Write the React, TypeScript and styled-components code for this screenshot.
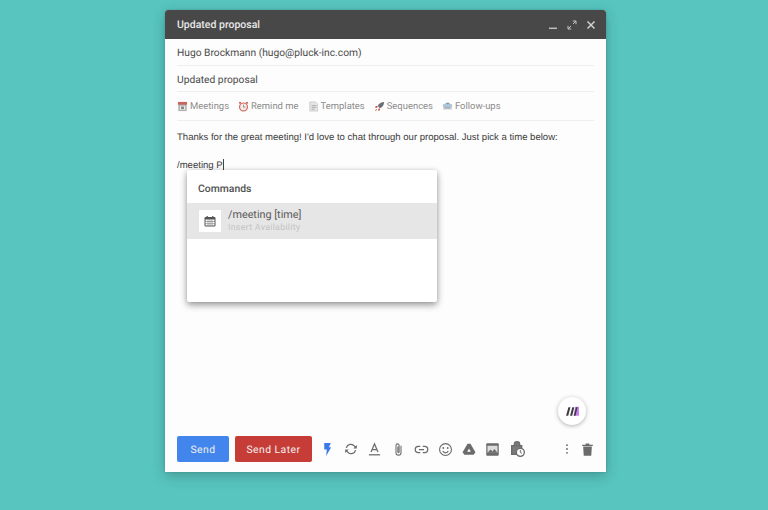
import React from "react";
import styled, { createGlobalStyle } from "styled-components";

const Global = createGlobalStyle`
  html, body { margin: 0; padding: 0; height: 100%; background: #58c5bf; overflow: hidden; }
  body { font-family: "Roboto", "Liberation Sans", sans-serif; text-rendering: geometricPrecision; }
`;

const Page = styled.div`
  width: 768px; height: 510px; box-sizing: border-box; padding: 10px 0 0 165px;
  background: #58c5bf;
`;
const Compose = styled.div`
  width: 441px; height: 462px; display: flex; flex-direction: column; background: #fdfdfd;
  border-radius: 3px 3px 0 0; box-shadow: 0 4px 14px rgba(0,0,0,.22), 0 0 3px rgba(0,0,0,.15); position: relative;
`;
const Header = styled.div`
  height: 29px; flex: none; background: #484848; border-radius: 3px 3px 0 0; display: flex; align-items: center;
  justify-content: space-between; padding: 0 10px 0 12px; color: #e9e9e9; font-size: 10.5px; font-weight: 500;
`;
const HeaderIcons = styled.div`display: flex; align-items: center; gap: 9px;`;
const Fields = styled.div`padding: 0 12px; flex: none;`;
const Field = styled.div<{ $h: number; $pt?: number }>`
  height: ${p => p.$h}px; box-sizing: border-box; padding-top: ${p => p.$pt ?? 0}px; border-bottom: 1px solid #efefef; display: flex; align-items: center;
  font-size: 10.25px; color: #4b4b4b;
`;
const Plugins = styled.div`
  height: 29px; box-sizing: border-box; padding-top: 1px; border-bottom: 1px solid #efefef; display: flex; align-items: center; gap: 9px;
`;
const Plugin = styled.div`
  display: flex; align-items: center; gap: 2px; font-size: 9.45px; color: #8c8c8c;
`;
const Body = styled.div`
  flex: 1; padding: 10px 12px 0; position: relative; font-family: "Liberation Sans", Arial, sans-serif;
  font-size: 9.55px; color: #3c3c3c;
`;
const Line = styled.div`height: 14px; line-height: 14px; margin-bottom: 14px; white-space: nowrap;`;
const Caret = styled.span`display: inline-block; width: 1px; height: 11px; background: #444; vertical-align: -2px;`;
const Popup = styled.div`
  position: absolute; left: 22px; top: 49px; width: 250px; height: 132px; background: #fff; border-radius: 2px;
  box-shadow: 0 3px 7px rgba(0,0,0,.4), 0 0 4px rgba(0,0,0,.08); font-family: "Roboto", sans-serif;
`;
const PopupTitle = styled.div`
  height: 33px; box-sizing: border-box; padding: 12px 0 0 11px; font-size: 10.4px; font-weight: 500; color: #505050; line-height: 13px;
`;
const Row = styled.div`
  height: 36px; background: #e6e6e6; display: flex; align-items: center; padding: 0 0 0 12px; gap: 7px;
`;
const IconBox = styled.div`
  width: 22px; height: 22px; background: #fff; display: flex; align-items: center; justify-content: center; border-radius: 1px;
`;
const RowText = styled.div`display: flex; flex-direction: column; margin-top: 1px;`;
const RowMain = styled.div`font-size: 10.8px; line-height: 13px; color: #5a5a5a;`;
const RowSub = styled.div`font-size: 8.8px; line-height: 13px; margin-top: 1px; color: #c4c4c4; letter-spacing: .3px;`;
const Fab = styled.div`
  position: absolute; left: 393px; top: 387px; width: 28px; height: 28px; border-radius: 50%; background: #fff;
  box-shadow: 0 1px 4px rgba(0,0,0,.3); display: flex; align-items: center; justify-content: center;
`;
const Footer = styled.div`
  height: 36px; box-sizing: border-box; flex: none; padding: 0 12px 10px; display: flex; align-items: center;
`;
const Btn = styled.div<{ $bg: string; $w: number; $ml?: number }>`
  flex: none; width: ${p => p.$w}px; height: 26px; margin-left: ${p => p.$ml ?? 0}px; border-radius: 2px; background: ${p => p.$bg}; color: #f0f0f0;
  display: flex; align-items: center; justify-content: center; font-size: 10.4px; font-weight: 400; letter-spacing: .45px;
`;
const Tools = styled.div`
  display: flex; align-items: center; margin-left: 3px;
`;
const Tool = styled.div<{ $w?: number }>`
  flex: none; width: ${p => p.$w ?? 23.7}px; height: 24px; display: flex; align-items: center; justify-content: center;
`;

const I = ({ s = 14, vb = 24, children }: { s?: number; vb?: number; children: React.ReactNode }) => (
  <svg width={s} height={s} viewBox={`0 0 ${vb} ${vb}`}>{children}</svg>
);
const G = "#6b6b6b";

const CalEmoji = () => (
  <I s={11} vb={12}>
    <rect x="1.500" y="2" width="9" height="9" fill="#a8a8a8" />
    <rect x="1" y="1" width="10" height="3" fill="#c9645e" />
    <rect x="3" y="5" width="6" height="5" fill="#e8e8e8" />
    <rect x="4.500" y="6" width="3" height="3" fill="#808080" />
  </I>
);
const ClockEmoji = () => (
  <I s={11} vb={12}>
    <circle cx="6" cy="6.500" r="4.300" fill="#f3ece8" stroke="#d4695f" strokeWidth="1.300" />
    <circle cx="2.200" cy="2" r="1.200" fill="#d4695f" />
    <circle cx="9.800" cy="2" r="1.200" fill="#d4695f" />
    <path d="M6 4v2.700h2" stroke="#777" strokeWidth=".8" fill="none" />
  </I>
);
const PageEmoji = () => (
  <I s={11} vb={12}>
    <path d="M2 1h6l2.500 2.500V11H2z" fill="#e6e6e6" stroke="#b4b4b4" strokeWidth=".6" />
    <path d="M4 5h5M4 7h5M4 9h3" stroke="#999" strokeWidth=".8" />
  </I>
);
const RocketEmoji = () => (
  <I s={11} vb={12}>
    <path d="M11 1C8 1 5.500 2.500 4 5.500L6.500 8C9.500 6.500 11 4 11 1z" fill="#6c6f78" />
    <path d="M4 5.500H2L1 7.200l2.400.3zM6.500 8v2l-1.700 1-.3-2.400z" fill="#c9574e" />
    <path d="M3 8.800 1.500 10.500 3.200 9.200" stroke="#dc7b4e" strokeWidth="1" fill="none" />
  </I>
);
const FollowEmoji = () => (
  <I s={11} vb={12}>
    <rect x="1" y="3.500" width="10" height="3" fill="#a9c3d6" />
    <rect x="1" y="6.500" width="10" height="3" fill="#d7dcdf" />
    <path d="M2.500 7.500h7" stroke="#7d8a93" strokeWidth="1" />
    <path d="M3 3.500l2-1.500h2.500L9 3.500" fill="#7c9cb3" />
  </I>
);

export default function App() {
  return (
    <Page>
      <Global />
      <Compose>
        <Header>
          <span>Updated proposal</span>
          <HeaderIcons>
            <I s={10} vb={10}><path d="M1 8.300h8" stroke="#bdbdbd" strokeWidth="1.500" /></I>
            <I s={10} vb={10}><path d="M1 9l3-3M6 4l3-3M5.800 1H9v3.200M1 5.800V9h3.200" stroke="#c4c4c4" strokeWidth="1" fill="none" /></I>
            <I s={10} vb={10}><path d="M1.500 1.500l7 7M8.500 1.500l-7 7" stroke="#cfcfcf" strokeWidth="1.500" /></I>
          </HeaderIcons>
        </Header>
        <Fields>
          <Field $h={27}>Hugo Brockmann (hugo@pluck-inc.com)</Field>
          <Field $h={26} $pt={1}>Updated proposal</Field>
          <Plugins>
            <Plugin><CalEmoji />Meetings</Plugin>
            <Plugin><ClockEmoji />Remind me</Plugin>
            <Plugin><PageEmoji />Templates</Plugin>
            <Plugin><RocketEmoji />Sequences</Plugin>
            <Plugin><FollowEmoji />Follow-ups</Plugin>
          </Plugins>
        </Fields>
        <Body>
          <Line>Thanks for the great meeting! I'd love to chat through our proposal. Just pick a time below:</Line>
          <Line>/meeting P<Caret /></Line>
          <Popup>
            <PopupTitle>Commands</PopupTitle>
            <Row>
              <IconBox>
                <I s={12} vb={12}>
                  <path d="M1 2.500h10V11H1z" fill="#fff" stroke="#555" strokeWidth="1" />
                  <path d="M1 2h10v2.500H1z" fill="#555" />
                  <path d="M3.200 1v2M8.800 1v2" stroke="#555" strokeWidth="1.200" />
                  <path d="M1 6.500h10M1 8.700h10M4 4.500V11M6 4.500V11M8 4.500V11" stroke="#777" strokeWidth=".6" />
                </I>
              </IconBox>
              <RowText>
                <RowMain>/meeting [time]</RowMain>
                <RowSub>Insert Availability</RowSub>
              </RowText>
            </Row>
          </Popup>
        </Body>
        <Fab>
          <I s={15} vb={14}>
            <path d="M9.500 2.500H13V11H8z" fill="#c77df0" />
            <path d="M3.200 3h1.900L3 11H1zM6.800 3h1.900L6.700 11h-2zM10.300 3h1.400L9.800 11H8.200z" fill="#3c3c3c" />
          </I>
        </Fab>
        <Footer>
          <Btn $bg="#4285ec" $w={52}>Send</Btn>
          <Btn $bg="#c63c36" $w={77} $ml={6}>Send Later</Btn>
          <Tools>
            <Tool $w={24}><I s={13} vb={14}><path d="M3.500 0h7L8.500 4.500H11L5.500 14l.8-7H3.500z" fill="#3b78e7" /></I></Tool>
            <Tool><I s={14}><path d="M4 10a8 8 0 0 1 14-3l2 2M20 14a8 8 0 0 1-14 3l-2-2" stroke={G} strokeWidth="2.200" fill="none" /><path d="M22 5v6h-6zM2 19v-6h6z" fill={G} /></I></Tool>
            <Tool><I s={15}><path d="M6.500 16L12 3l5.500 13M8.500 12h7" stroke={G} strokeWidth="2" fill="none" /><path d="M3 20.500h18" stroke={G} strokeWidth="2" /></I></Tool>
            <Tool><I s={15}><path d="M16 6v11a4 4 0 0 1-8 0V5.500a2.500 2.500 0 0 1 5 0V16a1 1 0 0 1-2 0V7" stroke={G} strokeWidth="1.700" fill="none" /></I></Tool>
            <Tool><I s={15}><path d="M10 7H7a5 5 0 0 0 0 10h3M14 7h3a5 5 0 0 1 0 10h-3M8 12h8" stroke={G} strokeWidth="2" fill="none" /></I></Tool>
            <Tool><I s={15}><circle cx="12" cy="12" r="9.500" stroke={G} strokeWidth="1.800" fill="none" /><circle cx="8.500" cy="9.500" r="1.500" fill={G} /><circle cx="15.500" cy="9.500" r="1.500" fill={G} /><path d="M7.500 14.500a5 5 0 0 0 9 0" stroke={G} strokeWidth="1.800" fill="none" /></I></Tool>
            <Tool><I s={14}><path d="M9.500 3h5L23 17.500 20 22H4l-3-4.500z" fill={G} /><path d="M12 11l-3 5.500h6z" fill="#fff" /></I></Tool>
            <Tool><I s={15}><rect x="2" y="2" width="20" height="20" rx="1.500" fill={G} /><rect x="4" y="6" width="16" height="11" fill="#ddd" /><path d="M4 17l5-5 3 3 3-4 5 6z" fill={G} /></I></Tool>
            <Tool><I s={16}><path d="M8 7V5a4 4 0 0 1 8 0v2M4 7h15v13H4z" stroke={G} strokeWidth="2" fill={G} fillOpacity=".9" /><circle cx="17" cy="17" r="6" fill="#fff" stroke={G} strokeWidth="2" /><path d="M17 13.500V17l2.500 1.500" stroke={G} strokeWidth="1.500" fill="none" /></I></Tool>
            <Tool $w={32} />
            <Tool $w={12}><I s={14} vb={14}><circle cx="7" cy="2.500" r="1.100" fill={G} /><circle cx="7" cy="7" r="1.100" fill={G} /><circle cx="7" cy="11.500" r="1.100" fill={G} /></I></Tool>
            <Tool $w={30}><I s={15}><path d="M5 7h14l-1 15H6z" fill={G} /><path d="M3.500 4.500h17v1.800h-17zM9 2.500h6v2H9z" fill={G} /></I></Tool>
          </Tools>
        </Footer>
      </Compose>
    </Page>
  );
}
